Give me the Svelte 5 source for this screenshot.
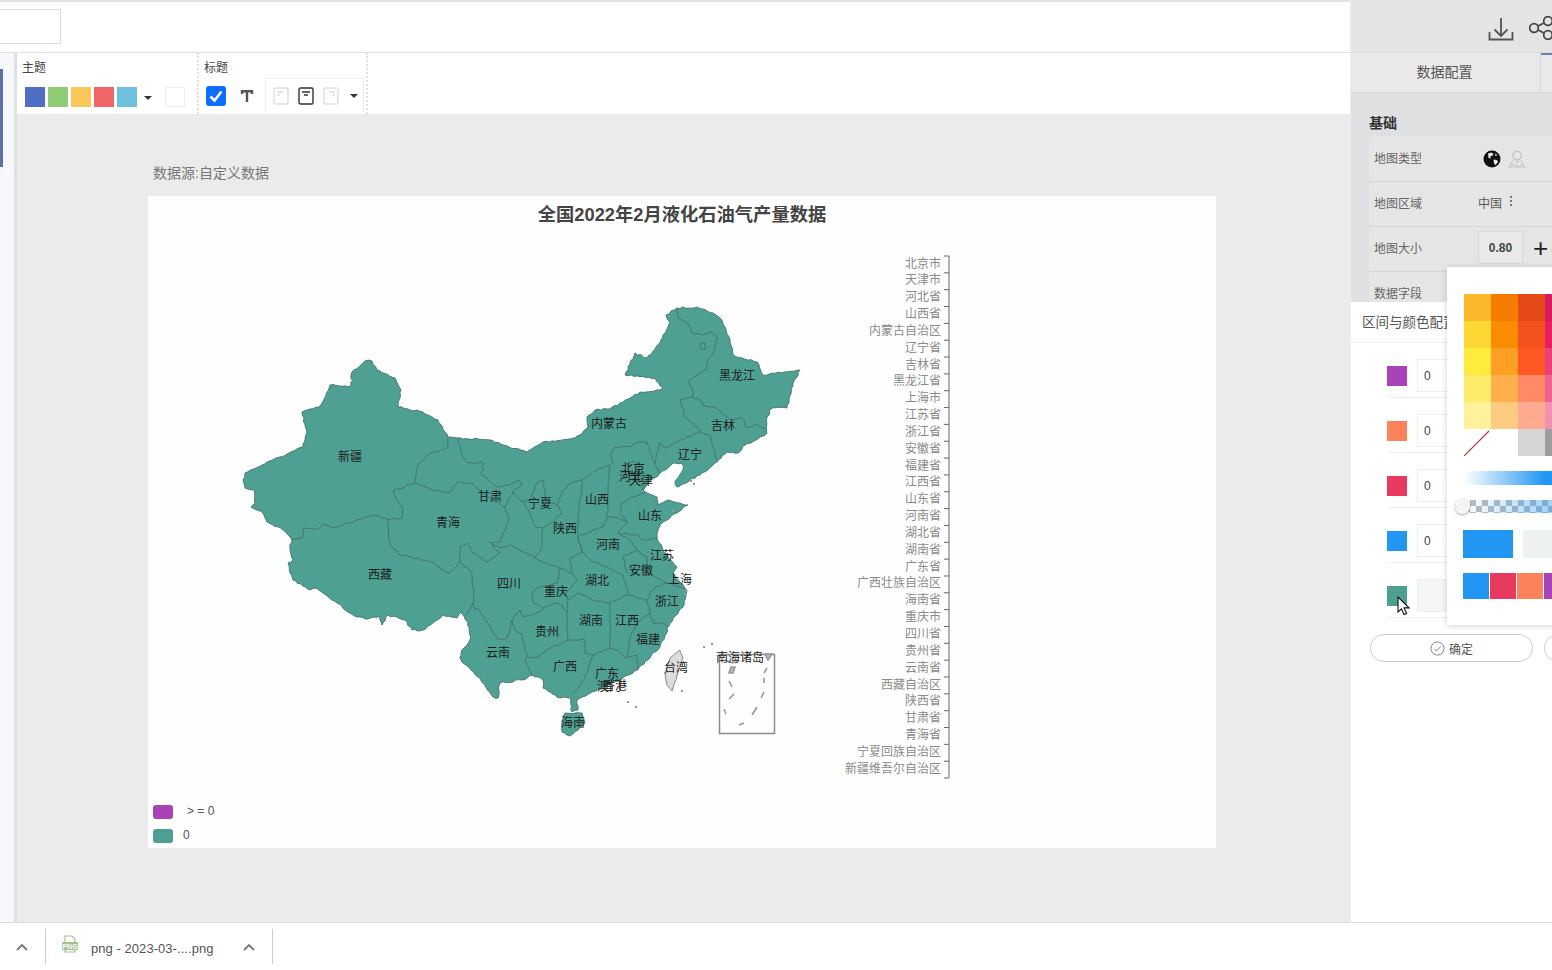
<script>
  function parse(s) {
    return s.trim().split(/\s+/).map((p) => p.split(',').map(Number));
  }
  let seed = 7;
  function rnd() {
    seed = (seed * 16807) % 2147483647;
    return seed / 2147483647 - 0.5;
  }
  function rough(s, closed = false, amp = 1.5) {
    const pts = parse(s);
    if (closed) pts.push(pts[0]);
    let d = `M${pts[0][0]} ${pts[0][1]}`;
    for (let i = 1; i < pts.length; i++) {
      const [x0, y0] = pts[i - 1];
      const [x1, y1] = pts[i];
      const len = Math.hypot(x1 - x0, y1 - y0);
      const n = Math.max(1, Math.round(len / 3));
      for (let k = 1; k < n; k++) {
        const t = k / n;
        const off = rnd() * amp;
        d += `L${(x0 + (x1 - x0) * t - ((y1 - y0) / len) * off).toFixed(1)} ${(y0 + (y1 - y0) * t + ((x1 - x0) / len) * off).toFixed(1)}`;
      }
      d += `L${x1} ${y1}`;
    }
    return d + (closed ? 'Z' : '');
  }

  const outline = rough(`365,361 372,361 377,370 395,378 401,390 398,407 423,412 438,420 448,437 457,438 490,440 503,445 527,452 543,442 570,439 580,435 588,427 587,417 595,410 610,409 630,398 640,392 660,390 663,388 655,378 625,375 635,353 647,358 660,343 670,322 666,315 677,308 697,307 713,313 722,320 730,340 733,355 757,362 763,375 800,370 793,383 787,408 772,408 767,417 767,433 760,437 745,445 738,453 727,452 717,462 700,475 677,487 675,482 683,470 682,463 673,463 660,473 647,485 643,490 657,497 658,505 668,500 688,505 677,513 663,522 658,530 657,537 663,550 677,567 673,573 687,590 683,607 670,623 660,647 637,670 620,680 590,693 577,700 578,710 572,712 570,698 557,697 543,688 543,680 532,675 522,680 500,683 498,698 493,697 480,678 462,662 460,658 462,650 470,640 468,622 460,612 457,618 443,615 423,630 412,630 405,620 388,615 382,625 380,616 368,619 357,617 348,612 337,603 332,600 315,588 310,590 293,580 290,573 288,563 293,560 290,548 292,540 283,530 267,522 263,513 251,507 255,503 254,490 245,488 243,480 245,473 262,465 273,460 303,447 307,433 302,412 319,407 322,403 330,385 351,386 352,372`, true, 1.8);

  const borders = [
    '292,540 302,538 304,528 318,529 325,524 333,528 357,520 373,515 388,519',
    '388,519 402,518 403,508 397,500 393,491 415,483',
    '415,483 418,465 430,453 447,448 448,438',
    '415,483 432,490 450,493 457,482 473,484 488,497 505,507 509,520 503,533 500,542 490,543 500,553 487,562 473,553 467,543 460,547 460,562 450,573 442,570 433,562 400,555 390,545 388,519',
    '460,562 472,573 474,600 473,603 468,613 465,616',
    '458,438 462,455 468,463 483,462 483,470 480,473 497,487 510,485 518,480 522,484 513,492 507,503 505,507',
    '513,492 523,502 530,513 533,523 537,528 543,528 553,522 562,513 557,505 545,500 545,490 543,480 537,483 535,487 530,500 523,502',
    '490,543 500,548 510,545 523,552 535,558',
    '543,528 542,535 542,547 535,558',
    '535,558 550,565 560,568 557,583',
    '560,568 572,573 570,558 582,552 578,537 578,513 582,487 582,480 570,483 562,492 557,505',
    '582,480 597,470 613,463 610,455 615,447 630,447 640,442 647,442 650,453 655,463 660,473',
    '610,466 608,485 608,513 603,527 593,530 578,537',
    '655,463 657,453 660,443 665,448 677,442 700,432 697,427 685,417 680,400 692,397 693,392 688,382 697,375 706,370 708,360 713,353 718,338 712,332 703,335 692,333 688,323 678,318 677,312 677,308',
    '692,397 700,400 703,405 717,408 727,417 733,420 742,418 747,428 757,424 767,430',
    '700,432 710,435 717,460',
    '606,517 618,518 627,522 620,513 622,503 633,497 645,493',
    '627,522 618,533 630,540 637,550 623,557 627,573',
    '618,533 637,535 643,540 657,538',
    '578,537 582,552 590,560 607,567 623,575 628,590 628,595',
    '637,550 647,557 647,572 657,578 667,583 687,590',
    '610,603 628,595 647,600 650,593 655,587 667,583',
    '568,600 578,593 593,600 610,603 610,620 610,648',
    '568,600 565,595 577,580 572,573',
    '557,583 537,588 532,593 533,602 543,608 557,603 562,605 567,613 568,600',
    '473,603 475,610 478,608 487,622 498,640 507,638 512,620 520,610 523,617 540,612 543,608',
    '567,613 568,640',
    '512,620 515,630 522,635 527,657',
    '527,657 538,657 550,648 563,643 568,640 575,640 585,640 585,653 593,655',
    '527,657 525,660 532,675',
    '593,655 588,670 582,683 572,695',
    '593,655 610,648 617,650 627,658 637,655 638,670',
    '647,600 650,613 638,622 630,638 627,658',
    '650,613 653,623 663,623 667,627',
    '625,467 633,461 640,465 637,474 628,475',
    '640,475 645,480 643,490 638,484',
    '700,343 705,343 706,349 701,349 700,343',
  ].map((b) => rough(b, false, 1.5));

  const hainan = rough('562,722 565,713 582,713 585,723 578,730 570,736 562,732', true, 1);
  const taiwan = rough('680,650 683,658 678,673 672,691 667,685 665,673 670,658', true, 0.7);

  const islands = [
    [627, 701], [635, 706], [703, 646], [711, 643], [690, 480], [693, 483], [672, 510], [664, 672], [681, 690], [684, 593], [685, 589],
  ];
  const insetDashes = [
    'M729 673L731 667L735 667L733 673Z',
    'M729 681L732 687',
    'M729 699L734 694',
    'M724 709L726 714',
    'M739 725L744 723',
    'M752 715L757 707',
    'M761 698L764 692',
    'M764 678L764 683',
    'M764 673L767 668',
    'M765 654L772 654L768 660Z',
    'M725 660Q731 664 737 662',
  ];

  const labels = [
    ['新疆', 350, 456], ['甘肃', 490, 496], ['青海', 448, 522], ['西藏', 380, 574], ['宁夏', 540, 503],
    ['山西', 597, 499], ['陕西', 565, 528], ['内蒙古', 609, 423], ['黑龙江', 737, 375], ['吉林', 723, 425],
    ['辽宁', 690, 454], ['北京', 633, 468], ['河北', 631, 476], ['天津', 641, 480], ['山东', 650, 515],
    ['河南', 608, 544], ['江苏', 662, 555], ['安徽', 641, 570], ['上海', 680, 579], ['四川', 509, 583],
    ['重庆', 556, 591], ['湖北', 597, 580], ['浙江', 667, 601], ['贵州', 547, 631], ['湖南', 591, 620],
    ['江西', 627, 620], ['福建', 648, 639], ['云南', 498, 652], ['广西', 565, 666], ['广东', 607, 673],
    ['澳门', 609, 686], ['香港', 615, 685], ['台湾', 676, 667], ['南海诸岛', 740, 657], ['海南', 573, 722],
  ];

  const names = ['北京市','天津市','河北省','山西省','内蒙古自治区','辽宁省','吉林省','黑龙江省','上海市','江苏省','浙江省','安徽省','福建省','江西省','山东省','河南省','湖北省','湖南省','广东省','广西壮族自治区','海南省','重庆市','四川省','贵州省','云南省','西藏自治区','陕西省','甘肃省','青海省','宁夏回族自治区','新疆维吾尔自治区'];
  const step = 16.84;

  const themes = ['#4f6fc5', '#8fcb74', '#fac858', '#ee6666', '#6fc0de'];
  const ranges = [
    { c: '#a844b8', v: '0' },
    { c: '#fc8259', v: '0' },
    { c: '#e8395f', v: '0' },
    { c: '#2196f3', v: '0' },
    { c: '#4c9f92', v: '', empty: true },
  ];
  const palette = [
    '#fbb82d', '#f57c00', '#e64a19', '#d81b60',
    '#fdd835', '#fb8c00', '#f4511e', '#e91e63',
    '#ffeb3b', '#ffa024', '#ff5722', '#ec407a',
    '#fdec6b', '#ffb04d', '#ff8a65', '#f06292',
    '#fdf29b', '#ffcb80', '#ffab91', '#f48fb1',
    '#ffffff', '#ffffff', '#d6d6d6', '#9e9e9e',
  ];
  const history = ['#2196f3', '#e8395f', '#fc8259', '#a844b8'];
</script>

<div class="page">
  <div class="main">
    <div class="left">
      <div class="topbar"><div class="search"></div></div>
      <div class="body">
        <div class="rail"><div class="thumb"></div></div>
        <div class="work">
          <div class="toolbar">
            <section class="tool theme">
              <div class="tool-label">主题</div>
              <div class="tool-row">
                {#each themes as c}
                  <span class="sw" style="background:{c}"></span>
                {/each}
                <span class="caret caret-theme"></span>
                <span class="sw blank"></span>
              </div>
            </section>
            <section class="tool title-tool">
              <div class="tool-label">标题</div>
              <div class="tool-row">
                <span class="check">
                  <svg viewBox="0 0 20 20" width="20" height="20"><path d="M4.500 10.500l4 4 7-9" fill="none" stroke="#fff" stroke-width="2.600"/></svg>
                </span>
                <svg class="t-icon" viewBox="0 0 14 14" width="14" height="14"><path d="M2 5V2.200h10V5M7 2.200V13" fill="none" stroke="#555" stroke-width="2.400"/></svg>
                <div class="align-box">
                  <svg viewBox="0 0 16 18" width="16" height="18"><rect x="1" y="1" width="14" height="16" rx="1.500" fill="none" stroke="#ddd" stroke-width="1.400"/><path d="M4 5h6M4 8h3" stroke="#ddd" stroke-width="1.400"/></svg>
                  <svg viewBox="0 0 16 18" width="16" height="18"><rect x="1" y="1" width="14" height="16" rx="1.500" fill="none" stroke="#333" stroke-width="1.400"/><path d="M4 5h8M6 8h4" stroke="#333" stroke-width="1.400"/></svg>
                  <svg viewBox="0 0 16 18" width="16" height="18"><rect x="1" y="1" width="14" height="16" rx="1.500" fill="none" stroke="#ddd" stroke-width="1.400"/><path d="M6 5h6M9 8h3" stroke="#ddd" stroke-width="1.400"/></svg>
                  <span class="caret"></span>
                </div>
              </div>
            </section>
          </div>
          <div class="canvas">
            <div class="source">数据源:自定义数据</div>
            <svg class="chart" viewBox="148 196 1068 652" width="1068" height="652">
              <text class="chart-title" x="682" y="214">全国2022年2月液化石油气产量数据</text>

              <path d={outline} class="land" />
              <path d={hainan} class="land" />
              {#each borders as b}
                <path d={b} class="border" />
              {/each}
              <path d={taiwan} class="tw" />
              {#each islands as [x, y]}
                <rect {x} {y} width="2" height="2" fill="#999" />
              {/each}

              <rect x="719.500" y="654.500" width="55" height="79" class="inset" />
              {#each insetDashes as d}
                <path {d} class="dash" />
              {/each}

              {#each labels as [t, x, y]}
                <text class="map-label" {x} y={y + 1}>{t}</text>
              {/each}

              <path d="M949 256V778" class="axis" />
              {#each names as _, i}
                <path d="M944 {256 + i * step}H949" class="axis" />
              {/each}
              <path d="M944 778H949" class="axis" />
              {#each names as n, i}
                <text class="axis-label" x="941" y={263.500 + i * step}>{n}</text>
              {/each}

              <rect x="153" y="805" width="20" height="14" rx="3" fill="#a844b8" />
              <text class="legend" x="187" y="811">&gt; = 0</text>
              <rect x="153" y="829" width="20" height="14" rx="3" fill="#4c9f92" />
              <text class="legend" x="183" y="835">0</text>
            </svg>
          </div>
        </div>
      </div>
    </div>

    <aside class="panel">
      <div class="panel-head">
        <svg viewBox="0 0 26 26" width="26" height="26"><path d="M13 2v18M6.500 13.500L13 20l6.500-6.500M1.500 16v7.500h23V16" fill="none" stroke="#555" stroke-width="1.800"/></svg>
        <svg class="share" viewBox="0 0 28 24" width="28" height="24"><circle cx="5" cy="12" r="4.300" fill="none" stroke="#444" stroke-width="1.700"/><circle cx="19" cy="5" r="4.300" fill="none" stroke="#444" stroke-width="1.700"/><circle cx="19" cy="19" r="4.300" fill="none" stroke="#444" stroke-width="1.700"/><path d="M9 10l6-3M9 14l6 3" stroke="#444" stroke-width="1.700"/></svg>
      </div>
      <div class="tabs">
        <div class="tab">数据配置</div>
        <div class="tab active"></div>
      </div>
      <div class="dim">
        <h3>基础</h3>
        <div class="row">
          <span class="k">地图类型</span>
          <span class="v icons">
            <svg viewBox="0 0 18 18" width="18" height="18"><circle cx="9" cy="9" r="8.500" fill="#111"/><path d="M5 3.500l3.500-1 2 1.500-1.500 2-2 .5 1 2-2.500-.5zM10.500 9.500l3.500.5 1 2-2.500 3-1.500-1.500zM12 3.500l2.500 1.500-2 1z" fill="#e6e6e6"/></svg>
            <svg viewBox="0 0 18 18" width="18" height="18"><circle cx="9" cy="5.500" r="4.200" fill="none" stroke="#c4c4c4" stroke-width="1.300"/><path d="M6.500 9L9 12.500 11.500 9M5 10.500L1 17h16l-4-6.500M3 14l9 3M15 14l-5 3" fill="none" stroke="#c8c8c8" stroke-width="1.100"/></svg>
          </span>
        </div>
        <div class="row">
          <span class="k">地图区域</span>
          <span class="v region">中国 <svg viewBox="0 0 4 12" width="4" height="12"><circle cx="2" cy="2" r="1" fill="#555"/><circle cx="2" cy="6" r="1" fill="#555"/><circle cx="2" cy="10" r="1" fill="#555"/></svg></span>
        </div>
        <div class="row">
          <span class="k">地图大小</span>
          <span class="v size"><span class="num">0.80</span><span class="plus">+</span></span>
        </div>
        <div class="row">
          <span class="k">数据字段</span>
        </div>
      </div>
      <div class="config">
        <div class="config-head">区间与颜色配置</div>
        <div class="ranges">
          {#each ranges as r}
            <div class="range">
              <span class="swatch" style="background:{r.c}"></span>
              <span class="input" class:empty={r.empty}>{r.v}</span>
            </div>
          {/each}
        </div>
        <div class="actions">
          <button class="pill">
            <svg viewBox="0 0 16 16" width="15" height="15"><circle cx="8" cy="8" r="7" fill="none" stroke="#6f82a8" stroke-width="1"/><path d="M4.500 8.200l2.500 2.500 4.500-5" fill="none" stroke="#6f82a8" stroke-width="1"/></svg>
            确定
          </button>
          <button class="pill"></button>
        </div>
      </div>

      <div class="picker">
        <div class="grid">
          {#each palette as c, i}
            <span class="cell" style="background:{c}">
              {#if i === 20}
                <svg viewBox="0 0 27 27" width="27" height="27"><path d="M0 27L25 2" stroke="#b23a48" stroke-width="1.200"/></svg>
              {/if}
            </span>
          {/each}
        </div>
        <div class="hue"></div>
        <div class="alpha"><span class="knob"></span></div>
        <div class="preview"><span class="now"></span><span class="prev"></span></div>
        <div class="history">
          {#each history as c}
            <span style="background:{c}"></span>
          {/each}
        </div>
      </div>

      <svg class="cursor" viewBox="0 0 13 20" width="13" height="20"><path d="M1 1v15l3.500-3.200 2.500 5.700 2.600-1.100-2.500-5.500H12z" fill="#fff" stroke="#111" stroke-width="1.100"/></svg>
    </aside>
  </div>

  <footer class="downloads">
    <svg class="chev first" viewBox="0 0 12 8" width="12" height="8"><path d="M1 7l5-5 5 5" fill="none" stroke="#777" stroke-width="1.800"/></svg>
    <span class="divider"></span>
    <svg class="file" viewBox="0 0 18 18" width="18" height="18"><path d="M4 7V1h7l3 3v3" fill="none" stroke="#a6bf8e" stroke-width="1.200"/><rect x="1" y="7" width="16" height="8" rx="1" fill="#a6bf8e"/><path d="M4 15v2h10v-2" fill="none" stroke="#a6bf8e" stroke-width="1.200"/><text x="9" y="13.500" text-anchor="middle" font-size="7" font-weight="700" fill="#fff" font-family="Liberation Sans">PNG</text></svg>
    <span class="fname">png - 2023-03-....png</span>
    <svg class="chev" viewBox="0 0 12 8" width="12" height="8"><path d="M1 7l5-5 5 5" fill="none" stroke="#777" stroke-width="1.800"/></svg>
    <span class="divider"></span>
  </footer>
</div>

<style>
  :global(body) {
    margin: 0;
    background: #fff;
  }
  .page {
    width: 1552px;
    height: 970px;
    overflow: hidden;
    display: flex;
    flex-direction: column;
    font-family: "Liberation Sans", "Noto Sans CJK SC", sans-serif;
    color: #555;
  }
  .main {
    height: 922px;
    display: flex;
    flex: none;
  }
  .left {
    width: 1350px;
    flex: none;
    display: flex;
    flex-direction: column;
  }
  .topbar {
    height: 53px;
    box-sizing: border-box;
    border-top: 2px solid #e2e2e2;
    border-bottom: 1px solid #e0e0e0;
    padding-top: 7px;
    background: #fff;
  }
  .search {
    margin-left: -10px;
    width: 69px;
    height: 33px;
    border: 1px solid #ddd;
  }
  .body {
    flex: 1;
    display: flex;
    min-height: 0;
  }
  .rail {
    width: 14px;
    background: #f6f8fb;
    flex: none;
    padding-top: 16px;
    box-sizing: border-box;
    overflow: hidden;
  }
  .thumb {
    width: 2.500px;
    height: 98px;
    box-sizing: border-box;
    background: #5b70a6;
  }
  .work {
    flex: 1;
    border-left: 3px solid #e0e0e0;
    display: flex;
    flex-direction: column;
    min-width: 0;
  }
  .toolbar {
    height: 61px;
    flex: none;
    background: #fff;
    display: flex;
    margin-right: 2px;
  }
  .tool {
    box-sizing: border-box;
    border-right: 2px dotted #e0e0e0;
    height: 61px;
  }
  .theme {
    width: 182px;
    padding: 7px 0 0 5px;
  }
  .title-tool {
    width: 169px;
    padding: 7px 0 0 5px;
  }
  .tool-label {
    font-size: 12px;
    line-height: 16px;
    color: #444;
  }
  .tool-row {
    display: flex;
    align-items: flex-start;
  }
  .theme .tool-row {
    margin-top: 11px;
    padding-left: 3px;
    gap: 3px;
  }
  .sw {
    width: 20px;
    height: 20px;
    flex: none;
  }
  .sw.blank {
    background: #fff;
    border: 1px solid #eee;
    box-sizing: border-box;
    margin-left: 10px;
  }
  .caret {
    width: 0;
    height: 0;
    border: 4px solid transparent;
    border-top: 4px solid #333;
    border-bottom: 0;
    flex: none;
  }
  .caret-theme {
    margin: 9px 0 0 4px;
  }
  .title-tool .tool-row {
    margin-top: 2px;
    padding-left: 2px;
  }
  .check {
    width: 20px;
    height: 20px;
    border-radius: 3px;
    background: #0d6efd;
    margin-top: 8px;
    flex: none;
  }
  .check svg {
    display: block;
  }
  .t-icon {
    margin: 11px 0 0 14px;
    flex: none;
  }
  .align-box {
    margin-left: 11px;
    width: 99px;
    height: 34px;
    box-sizing: border-box;
    border: 1px solid #eee;
    border-bottom: 0;
    display: flex;
    align-items: center;
    padding: 0 0 0 7px;
    gap: 9px;
  }
  .align-box .caret {
    margin-left: 2px;
  }
  .canvas {
    flex: 1;
    background: #ebebeb;
    padding: 49px 0 0 131px;
  }
  .source {
    font-size: 14px;
    line-height: 20px;
    color: #777;
    margin: 0 0 13px 5px;
  }
  .chart {
    display: block;
    background: #fefefe;
  }
  .chart-title {
    font-size: 18.300px;
    font-weight: 700;
    fill: #444;
    text-anchor: middle;
    dominant-baseline: central;
  }
  .land {
    fill: #4ea093;
    stroke: #4a7a74;
    stroke-width: 1;
    stroke-linejoin: round;
  }
  .border {
    fill: none;
    stroke: #467570;
    stroke-width: 1;
    stroke-linejoin: round;
  }
  .tw {
    fill: #dcdcdc;
    stroke: #888;
    stroke-width: 1;
  }
  .inset {
    fill: none;
    stroke: #8c8c8c;
    stroke-width: 1.500;
  }
  .dash {
    fill: #bbb;
    stroke: #999;
    stroke-width: 1.600;
  }
  .map-label {
    font-size: 12px;
    fill: #1c1c1c;
    text-anchor: middle;
    dominant-baseline: central;
  }
  .axis {
    fill: none;
    stroke: #666;
    stroke-width: 1;
  }
  .axis-label {
    font-size: 12px;
    fill: #8a8a8a;
    text-anchor: end;
    dominant-baseline: central;
  }
  .legend {
    font-size: 12px;
    fill: #555;
    dominant-baseline: central;
  }

  .panel {
    position: relative;
    flex: 1;
    min-width: 0;
    overflow: hidden;
    display: flex;
    flex-direction: column;
    background: #fff;
    border-left: 1px solid #eee;
    box-sizing: border-box;
  }
  .panel-head {
    height: 53px;
    flex: none;
    box-sizing: border-box;
    background: #e4e4e4;
    border-bottom: 1px solid #d9d9d9;
    display: flex;
    align-items: center;
    padding: 5px 0 0 137px;
    gap: 15px;
  }
  .panel-head svg {
    flex: none;
  }
  .share {
    margin-top: -2px;
  }
  .tabs {
    height: 40px;
    flex: none;
    display: flex;
    box-sizing: border-box;
    background: #e9e9e9;
    border-bottom: 1px solid #d4d6d8;
  }
  .tab {
    width: 190px;
    flex: none;
    padding-right: 2px;
    box-sizing: border-box;
    text-align: center;
    font-size: 14px;
    line-height: 39px;
    color: #555;
    border-right: 1px solid #d6d6d6;
  }
  .tab.active {
    width: 20px;
    border-right: 0;
    border-top: 2px solid #6b82b8;
  }
  .dim {
    height: 209px;
    flex: none;
    box-sizing: border-box;
    background: #dee0e2;
    padding-left: 18px;
    overflow: hidden;
  }
  .dim h3 {
    margin: 0;
    height: 44px;
    font-size: 14px;
    line-height: 61px;
    font-weight: 700;
    color: #333;
  }
  .row {
    height: 45px;
    box-sizing: border-box;
    background: #e5e5e5;
    border-bottom: 1px solid #d4d4d4;
    display: flex;
    align-items: center;
    padding: 0 0 3px 5px;
  }
  .k {
    width: 104px;
    flex: none;
    font-size: 12px;
    color: #666;
  }
  .v {
    font-size: 12px;
    color: #555;
    display: flex;
    align-items: center;
  }
  .icons {
    padding-left: 5px;
    gap: 7px;
    margin-top: 2px;
  }
  .region {
    gap: 7px;
  }
  .region svg {
    margin-top: -4px;
  }
  .num {
    width: 45px;
    height: 33px;
    box-sizing: border-box;
    border: 1px solid #d8d8d8;
    background: #e9e9e9;
    text-align: center;
    line-height: 33px;
    font-weight: 700;
    color: #444;
  }
  .plus {
    margin-left: 10px;
    font-size: 26px;
    line-height: 30px;
    color: #222;
  }
  .config {
    flex: 1;
    background: #fff;
  }
  .config-head {
    height: 41px;
    box-sizing: border-box;
    border-bottom: 1px solid #eee;
    padding-left: 11px;
    font-size: 13.500px;
    line-height: 41px;
    color: #555;
    white-space: nowrap;
  }
  .ranges {
    padding-left: 36px;
  }
  .range {
    height: 55px;
    box-sizing: border-box;
    padding-top: 11px;
    border-bottom: 1px solid #eee;
    display: flex;
    align-items: center;
    gap: 10px;
  }
  .swatch {
    width: 20px;
    height: 20px;
    flex: none;
  }
  .input {
    width: 80px;
    height: 33px;
    box-sizing: border-box;
    border: 1px solid #eee;
    padding-left: 6px;
    font-size: 12px;
    line-height: 33px;
    color: #444;
  }
  .input.empty {
    background: #f5f5f5;
  }
  .actions {
    display: flex;
    gap: 11px;
    padding: 16px 0 0 19px;
  }
  .pill {
    width: 163px;
    height: 28px;
    flex: none;
    border: 1px solid #ccc;
    border-radius: 15px;
    background: #fff;
    font: inherit;
    font-size: 12px;
    color: #555;
    display: flex;
    align-items: center;
    justify-content: center;
    gap: 4px;
    padding: 0;
  }
  .picker {
    position: absolute;
    left: 96px;
    top: 267px;
    width: 220px;
    height: 358px;
    box-sizing: border-box;
    background: #fff;
    box-shadow: 0 1px 6px rgba(0, 0, 0, .18);
    padding: 27px 0 0 17px;
  }
  .grid {
    display: grid;
    grid-template-columns: repeat(4, 27px);
    grid-auto-rows: 27px;
  }
  .cell {
    display: block;
  }
  .cell svg {
    display: block;
  }
  .hue {
    margin-top: 15px;
    height: 14px;
    background: linear-gradient(to right, #fff, #2196f3 40%);
  }
  .alpha {
    position: relative;
    margin-top: 15px;
    height: 13px;
    background: linear-gradient(to right, rgba(33, 150, 243, 0), rgba(33, 150, 243, .45) 45%), repeating-conic-gradient(#bdbdbd 0 25%, #fff 0 50%) 0 0 / 12px 12px;
  }
  .knob {
    position: absolute;
    left: -9px;
    top: -1px;
    width: 15px;
    height: 15px;
    border-radius: 50%;
    background: #f4f4f4;
    box-shadow: 0 1px 3px rgba(0, 0, 0, .35);
  }
  .preview {
    display: flex;
    gap: 10px;
    margin: 17px 0 0 -1px;
  }
  .now {
    width: 50px;
    height: 28px;
    background: #2196f3;
    flex: none;
  }
  .prev {
    width: 80px;
    height: 28px;
    background: #eef1f2;
    flex: none;
  }
  .history {
    display: flex;
    gap: 1px;
    margin: 15px 0 0 -1px;
  }
  .history span {
    width: 26px;
    height: 26px;
    flex: none;
  }
  .cursor {
    position: absolute;
    left: 46px;
    top: 596px;
  }
  .downloads {
    flex: 1;
    box-sizing: border-box;
    border-top: 1px solid #dcdcdc;
    background: #fff;
    display: flex;
    align-items: center;
  }
  .chev {
    flex: none;
  }
  .chev.first {
    margin-left: 16px;
  }
  .divider {
    width: 1px;
    height: 35px;
    background: #ccc;
    flex: none;
  }
  .first + .divider {
    margin-left: 17px;
  }
  .file {
    margin: -6px 0 0 15px;
    flex: none;
  }
  .fname {
    margin: 3px 0 0 12px;
    width: 152px;
    flex: none;
    font-size: 13px;
    letter-spacing: .05px;
    color: #555;
  }
  .fname + .chev + .divider {
    margin-left: 17px;
  }
</style>
